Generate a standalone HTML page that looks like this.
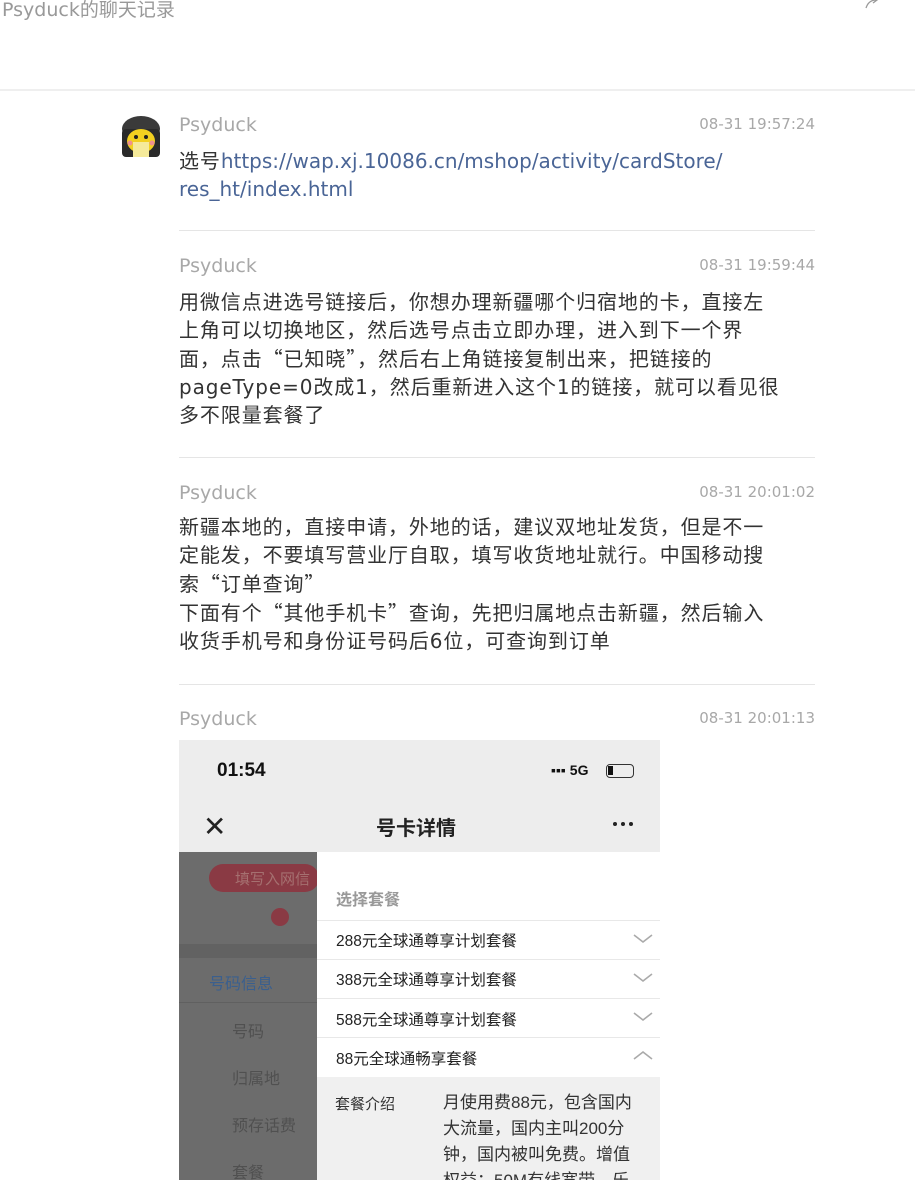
<!DOCTYPE html>
<html><head><meta charset="utf-8"><style>
*{margin:0;padding:0;box-sizing:border-box}
body{width:915px;height:1180px;overflow:hidden;background:#fff;font-family:"DejaVu Sans","Noto Sans CJK SC",sans-serif;position:relative;color:#333}
.a{position:absolute;white-space:nowrap}
.name{font-size:19px;color:#a8a8a8}
.time{font-size:15px;color:#a8a8a8;right:100px;text-align:right}
.body{font-size:20px;line-height:28px;color:#333;white-space:normal;width:640px;letter-spacing:0.9px}
.q{font-family:"Noto Sans CJK SC",sans-serif}
.hr{position:absolute;left:179px;width:636px;height:1px;background:#e5e5e5}
a{color:#4a6596;text-decoration:none;letter-spacing:0}
</style></head><body>
<div class="a" style="left:2px;top:-5px;font-size:19px;color:#999">Psyduck的聊天记录</div>
<svg class="a" style="left:864px;top:-4px" width="18" height="14" viewBox="0 0 18 14"><path d="M2 12c2-6 6-8 10-8M9 1l4 3-4 3" stroke="#999" fill="none" stroke-width="1.3"/></svg>
<div class="a" style="left:0;top:89px;width:915px;height:2px;background:#efefef"></div>

<svg class="a" style="left:120px;top:115px" width="42" height="43" viewBox="0 0 42 43">
<ellipse cx="21" cy="14" rx="19" ry="13" fill="#3a3a3a"/>
<rect x="2" y="14" width="38" height="28" rx="4" fill="#2a2a2a"/>
<ellipse cx="21" cy="26" rx="14" ry="12" fill="#f2d020"/>
<rect x="13" y="27" width="16" height="15" fill="#f5ea9a"/>
<circle cx="16" cy="22" r="2" fill="#222"/><circle cx="26" cy="22" r="2" fill="#222"/>
<circle cx="10" cy="28" r="2.5" fill="#f09090"/><circle cx="32" cy="28" r="2.5" fill="#f09090"/>
</svg>

<div class="a name" style="left:179px;top:114px">Psyduck</div>
<div class="a time" style="top:115px">08-31 19:57:24</div>
<div class="a body" style="left:179px;top:147px">选号<a>https://wap.xj.10086.cn/mshop/activity/cardStore/<br>res_ht/index.html</a></div>
<div class="hr" style="top:230px"></div>

<div class="a name" style="left:179px;top:255px">Psyduck</div>
<div class="a time" style="top:256px">08-31 19:59:44</div>
<div class="a body" style="left:179px;top:288px">用微信点进选号链接后，你想办理新疆哪个归宿地的卡，直接左<br>上角可以切换地区，然后选号点击立即办理，进入到下一个界<br>面，点击<span class="q">“</span>已知晓<span class="q">”</span>，然后右上角链接复制出来，把链接的<br>pageType=0改成1，然后重新进入这个1的链接，就可以看见很<br>多不限量套餐了</div>
<div class="hr" style="top:457px"></div>

<div class="a name" style="left:179px;top:482px">Psyduck</div>
<div class="a time" style="top:483px">08-31 20:01:02</div>
<div class="a body" style="left:179px;top:513px">新疆本地的，直接申请，外地的话，建议双地址发货，但是不一<br>定能发，不要填写营业厅自取，填写收货地址就行。中国移动搜<br>索<span class="q">“</span>订单查询<span class="q">”</span><br>下面有个<span class="q">“</span>其他手机卡<span class="q">”</span>查询，先把归属地点击新疆，然后输入<br>收货手机号和身份证号码后6位，可查询到订单</div>
<div class="hr" style="top:684px"></div>

<div class="a name" style="left:179px;top:708px">Psyduck</div>
<div class="a time" style="top:709px">08-31 20:01:13</div>

<div class="a" style="left:179px;top:740px;width:481px;height:440px;background:#ededed;overflow:hidden;font-family:'Liberation Sans','Noto Sans CJK SC',sans-serif">
 <div class="a" style="left:38px;top:20px;font-size:19px;font-weight:bold;color:#111">01:54</div>
 <div class="a" style="left:372px;top:22px;font-size:14px;font-weight:bold;color:#111">▪▪▪ 5G</div>
 <div class="a" style="left:427px;top:24px;width:28px;height:14px;border:1.5px solid #333;border-radius:4px"><div style="width:5px;height:9px;margin:1px;background:#111"></div></div>
 <div class="a" style="left:24px;top:70px;font-size:28px;color:#222;font-weight:300">✕</div>
 <div class="a" style="left:197px;top:72px;font-size:20px;font-weight:bold;color:#222">号卡详情</div>
 <div class="a" style="left:434px;top:82px;width:4px;height:4px;border-radius:2px;background:#222;box-shadow:8px 0 #222,16px 0 #222"></div>
 <div class="a" style="left:0;top:112px;width:138px;height:328px;background:#6c6c6c">
  <div class="a" style="left:30px;top:12px;width:110px;height:28px;border-radius:14px;background:#8a3a44;color:#a57070;font-size:15px;padding:4px 0 0 26px">填写入网信</div>
  <div class="a" style="left:92px;top:56px;width:18px;height:18px;border-radius:50%;background:#8a3a44"></div>
  <div class="a" style="left:0;top:92px;width:138px;height:14px;background:#626262"></div>
  <div class="a" style="left:30px;top:118px;font-size:16px;color:#3a5f8e">号码信息</div>
  <div class="a" style="left:0;top:150px;width:138px;height:1px;background:#606060"></div>
  <div class="a" style="left:53px;top:166px;font-size:16px;color:#505050">号码</div>
  <div class="a" style="left:53px;top:213px;font-size:16px;color:#505050">归属地</div>
  <div class="a" style="left:53px;top:260px;font-size:16px;color:#505050">预存话费</div>
  <div class="a" style="left:53px;top:307px;font-size:16px;color:#505050">套餐</div>
 </div>
 <div class="a" style="left:138px;top:112px;width:343px;height:225px;background:#fff">
  <div class="a" style="left:19px;top:34px;font-size:16px;font-weight:bold;color:#999">选择套餐</div>
  <div class="a" style="left:0;top:68px;width:343px;height:1px;background:#e8e8e8"></div>
  <div class="a" style="left:19px;top:77px;font-size:15.5px;color:#222">288元全球通尊享计划套餐</div>
  <div class="a" style="left:0;top:107px;width:343px;height:1px;background:#e8e8e8"></div>
  <div class="a" style="left:19px;top:116px;font-size:15.5px;color:#222">388元全球通尊享计划套餐</div>
  <div class="a" style="left:0;top:146px;width:343px;height:1px;background:#e8e8e8"></div>
  <div class="a" style="left:19px;top:156px;font-size:15.5px;color:#222">588元全球通尊享计划套餐</div>
  <div class="a" style="left:0;top:185px;width:343px;height:1px;background:#e8e8e8"></div>
  <div class="a" style="left:19px;top:195px;font-size:15.5px;color:#222">88元全球通畅享套餐</div>
  <svg class="a" style="left:316px;top:82px" width="20" height="130" viewBox="0 0 20 130"><g stroke="#aaa" stroke-width="1.6" fill="none"><path d="M1 1l9 7 9-7M1 40l9 7 9-7M1 79l9 7 9-7M1 125l9-7 9 7"/></g></svg>
 </div>
 <div class="a" style="left:138px;top:337px;width:343px;height:103px;background:#f0f0f0">
  <div class="a" style="left:18px;top:16px;font-size:15px;color:#333">套餐介绍</div>
  <div class="a" style="left:126px;top:13px;font-size:17px;line-height:26px;color:#333;white-space:normal;width:200px">月使用费88元，包含国内大流量，国内主叫200分钟，国内被叫免费。增值权益：50M有线宽带，乐</div>
 </div>
</div>
</body></html>
